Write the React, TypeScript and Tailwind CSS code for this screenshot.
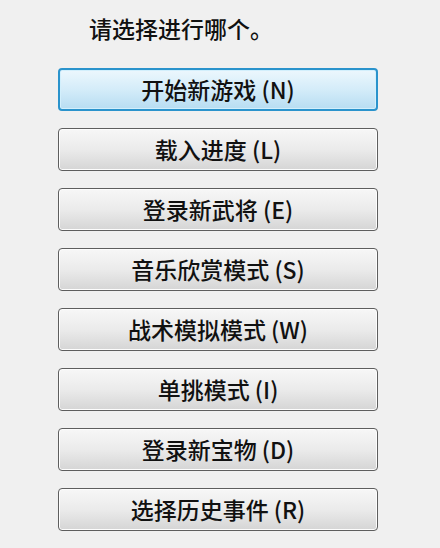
import React from 'react';

const items = [
  '开始新游戏 (N)',
  '载入进度 (L)',
  '登录新武将 (E)',
  '音乐欣赏模式 (S)',
  '战术模拟模式 (W)',
  '单挑模式 (I)',
  '登录新宝物 (D)',
  '选择历史事件 (R)',
];

const font = { fontFamily: '"Noto Sans CJK SC", "Noto Sans", sans-serif' };

export default function App() {
  return (
    <div className="w-[440px] h-[548px] bg-[#f0f0f0] overflow-hidden text-[#111]" style={font}>
      <div className="pl-[89px] pt-[12px] h-[68px] text-[23px] font-medium leading-[32px] tracking-[0px]">请选择进行哪个。</div>
      <div className="flex flex-col gap-[17px] pl-[58px]">
        {items.map((label, i) => (
          <button
            key={label}
            className={`w-[320px] h-[43px] rounded-[4px] p-0 ${
              i === 0
                ? 'border-2 border-[#2a93cc] bg-gradient-to-b from-[#ecf7fd] via-[#d4ecf9] to-[#b7ddf2] shadow-[inset_0_0_0_1px_#d2effc]'
                : 'border border-[#5e5e5e] bg-gradient-to-b from-[#f7f7f7] via-[#ebebeb] to-[#d5d5d5] shadow-[inset_0_0_0_1px_#fdfdfd]'
            }`}
          >
            <span className={`text-[23px] font-medium ${i === 0 ? 'leading-[39px]' : 'leading-[41px]'}`}>{label}</span>
          </button>
        ))}
      </div>
    </div>
  );
}
